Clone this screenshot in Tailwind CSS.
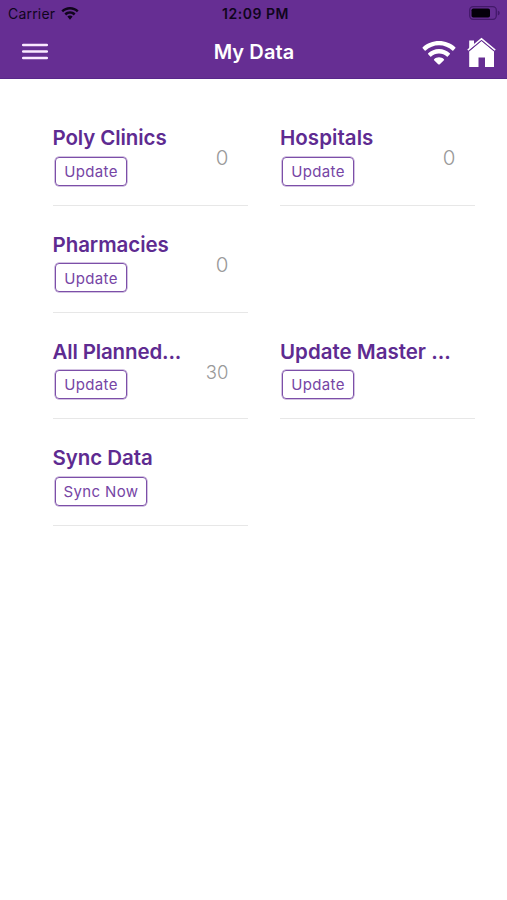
<!DOCTYPE html>
<html lang="en">
<head>
<meta charset="utf-8">
<title>My Data</title>
<script src="https://cdn.jsdelivr.net/npm/@tailwindcss/browser@4"></script>
</head>
<body class="bg-white font-['Inter',sans-serif] w-[507px] h-[900px] overflow-hidden">
<header class="h-[79px] bg-[#662e93] border-b border-[#58278a]">
  <div class="grid grid-cols-3 h-7 items-center text-[#10051c] pl-[8px] pr-[7px]">
    <div class="flex items-center gap-[6px] text-[14px] leading-7"><span class="tracking-[0.200px]">Carrier</span>
      <svg class="w-[18px] h-[13px] mt-[-1px]" viewBox="0 0 34 25" fill="currentColor"><path d="M17 0C10.500 0 4.700 2.500 .4 6.600l3.300 3.700C7.200 7 11.800 5 17 5s9.800 2 13.300 5.300l3.300-3.700C29.300 2.500 23.500 0 17 0zM17 8.300c-4.100 0-7.900 1.600-10.700 4.300l3.400 3.700c1.900-1.900 4.500-3.100 7.300-3.100s5.400 1.200 7.300 3.100l3.400-3.700C24.900 9.900 21.100 8.300 17 8.300zM17 16.400c-2 0-3.800.8-5.100 2.100L17 24.500l5.100-6c-1.300-1.300-3.100-2.100-5.100-2.100z"/></svg>
    </div>
    <div class="text-center text-[14px] font-semibold leading-7 tracking-[0.520px] pl-[3px]">12:09 PM</div>
    <svg class="justify-self-end w-[31px] h-[14px] mt-[-2px]" viewBox="0 0 31 14"><rect x=".7" y=".7" width="26.600" height="12.600" rx="3.500" fill="none" stroke="#43196a" stroke-width="1.300"/><rect x="2.500" y="2.500" width="18.500" height="9" rx="1.800" fill="#05000a"/><path d="M28.800 4.500v5q2-.8 2-2.500t-2-2.500z" fill="#43196a"/></svg>
  </div>
  <div class="grid grid-cols-[147px_170px_1fr] h-[48px] items-center pl-[22px] pr-[11px] text-white">
    <svg class="w-[26px] h-[17px] mt-[-1px]" viewBox="0 0 26 17" stroke="#fae9ff" stroke-width="2.500" stroke-linecap="round"><path d="M1.200 2h23.600M1.200 8.500h23.600M1.200 15h23.600"/></svg>
    <h1 class="text-center text-[20px] font-semibold leading-6 whitespace-nowrap tracking-[0.1px]">My Data</h1>
    <div class="flex justify-end items-center gap-[11px]">
      <svg class="w-[34px] h-[25px]" viewBox="0 0 34 25" fill="white"><path d="M17 1C10.700 1 5 3.300.7 7.200q-.5.500 0 1l2 2.200q.5.500 1 0C7.200 7.200 11.900 5.200 17 5.200s9.800 2 13.300 5.200q.5.500 1 0l2-2.200q.5-.5 0-1C29 3.300 23.300 1 17 1zM17 9.100c-4.200 0-8 1.600-10.800 4.200q-.5.500 0 1l2 2.200q.5.400 1 0c2-1.900 4.800-3.100 7.800-3.100s5.800 1.200 7.800 3.100q.5.400 1 0l2-2.200q.5-.5 0-1C25 10.700 21.200 9.100 17 9.100zM17 17.300c-1.900 0-3.600.7-4.900 1.900q-.5.500 0 1l4.100 4q.8.700 1.600 0l4.100-4q.5-.5 0-1c-1.300-1.200-3-1.900-4.900-1.900z"/></svg>
      <svg class="w-[29px] h-[30px]" viewBox="0 0 29 30" fill="white"><path d="M2.200 3.500h4.800v4l-4.800 4.600z"/><path d="M14.500 4L27 14.500V30h-9V20.500h-6.500V30H2.200V14.500z"/><path d="M.8 13.100L14.500 1.800l13.700 11.300" fill="none" stroke="white" stroke-width="1.500"/><path d="M1.600 14.200L14.500 3.600l12.900 10.600" fill="none" stroke="#662e93" stroke-width=".75"/></svg>
    </div>
  </div>
</header>
<main class="grid grid-cols-[195px_195px] auto-rows-[106.600px] gap-x-[32px] pl-[53px] pt-[20.400px] text-[#5e2b91]">
  <section class="border-b border-[#e7e7e7] flex justify-between pt-[26px] pr-[19.500px]">
    <div><h2 class="ml-[-0.500px] text-[20.500px] font-[630] leading-[26px] tracking-[-0.100px] whitespace-nowrap">Poly Clinics</h2><button class="block ml-[2px] mt-[5.500px] w-[72px] h-[29px] border border-[#7c4fa8] shadow-[0_0_0_0.500px_#a887c5] rounded-[4px] pt-[2px] text-[15px] tracking-[0.350px] text-[#7645a5] whitespace-nowrap">Update</button></div>
    <span class="text-[20.500px] font-light text-[#999] leading-[26px] mt-[20px] inline-block">0</span>
  </section>
  <section class="border-b border-[#e7e7e7] flex justify-between pt-[26px] pr-[19.500px]">
    <div><h2 class="text-[20.500px] font-[630] leading-[26px] tracking-[0.050px] whitespace-nowrap">Hospitals</h2><button class="block ml-[2px] mt-[5.500px] w-[72px] h-[29px] border border-[#7c4fa8] shadow-[0_0_0_0.500px_#a887c5] rounded-[4px] pt-[2px] text-[15px] tracking-[0.350px] text-[#7645a5] whitespace-nowrap">Update</button></div>
    <span class="text-[20.500px] font-light text-[#999] leading-[26px] mt-[20px] inline-block">0</span>
  </section>
  <section class="col-start-1 border-b border-[#e7e7e7] flex justify-between pt-[26px] pr-[19.500px]">
    <div><h2 class="ml-[-0.500px] text-[20.500px] font-[630] leading-[26px] tracking-[-0.060px] whitespace-nowrap">Pharmacies</h2><button class="block ml-[2px] mt-[5.500px] w-[72px] h-[29px] border border-[#7c4fa8] shadow-[0_0_0_0.500px_#a887c5] rounded-[4px] pt-[2px] text-[15px] tracking-[0.350px] text-[#7645a5] whitespace-nowrap">Update</button></div>
    <span class="text-[20.500px] font-light text-[#999] leading-[26px] mt-[20px] inline-block">0</span>
  </section>
  <section class="col-start-1 border-b border-[#e7e7e7] flex justify-between pt-[26px] pr-[19.500px]">
    <div><h2 class="ml-[-0.500px] text-[20.500px] font-[630] leading-[26px] tracking-[-0.150px] whitespace-nowrap">All Planned...</h2><button class="block ml-[2px] mt-[5.500px] w-[72px] h-[29px] border border-[#7c4fa8] shadow-[0_0_0_0.500px_#a887c5] rounded-[4px] pt-[2px] text-[15px] tracking-[0.350px] text-[#7645a5] whitespace-nowrap">Update</button></div>
    <span class="text-[18.500px] font-light text-[#999] leading-[26px] mt-[20px] inline-block">30</span>
  </section>
  <section class="border-b border-[#e7e7e7] flex justify-between pt-[26px] pr-[19.500px]">
    <div><h2 class="text-[20.500px] font-[630] leading-[26px] tracking-[0px] whitespace-nowrap">Update Master ...</h2><button class="block ml-[2px] mt-[5.500px] w-[72px] h-[29px] border border-[#7c4fa8] shadow-[0_0_0_0.500px_#a887c5] rounded-[4px] pt-[2px] text-[15px] tracking-[0.350px] text-[#7645a5] whitespace-nowrap">Update</button></div>
  </section>
  <section class="col-start-1 border-b border-[#e7e7e7] flex justify-between pt-[26px] pr-[19.500px]">
    <div><h2 class="ml-[-0.500px] text-[20.500px] font-[630] leading-[26px] tracking-[-0.060px] whitespace-nowrap">Sync Data</h2><button class="block ml-[2px] mt-[5.500px] w-[92px] h-[29px] border border-[#7c4fa8] shadow-[0_0_0_0.500px_#a887c5] rounded-[4px] pt-[2px] text-[15px] tracking-[0.350px] text-[#7645a5] whitespace-nowrap">Sync Now</button></div>
  </section>
</main>
</body>
</html>
